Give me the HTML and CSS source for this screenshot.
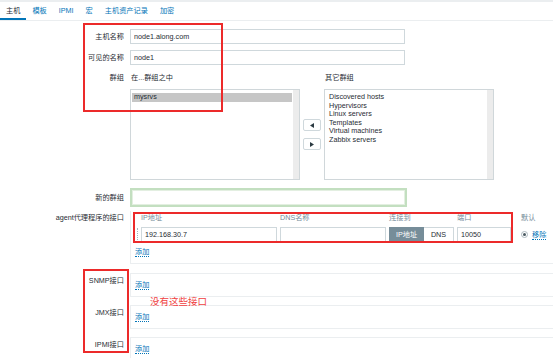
FILE: index.html
```html
<!DOCTYPE html>
<html lang="zh">
<head>
<meta charset="utf-8">
<title>主机</title>
<link rel="stylesheet" href="styles.css">
</head>
<body>
<div class="tabs">
  <span class="tab active">主机</span>
  <span class="tab">模板</span>
  <span class="tab">IPMI</span>
  <span class="tab">宏</span>
  <span class="tab">主机资产记录</span>
  <span class="tab">加密</span>
</div>
<div class="form">
  <div class="row row-name">
    <div class="lbl">主机名称</div>
    <input class="text w-long" type="text" value="node1.along.com">
  </div>
  <div class="row row-visible">
    <div class="lbl">可见的名称</div>
    <input class="text w-long" type="text" value="node1">
  </div>
  <div class="row row-groups">
    <div class="lbl">群组</div>
    <div class="groups">
      <div class="ghead">在...群组之中</div>
      <div></div>
      <div class="ghead">其它群组</div>
      <div class="listbox">
        <div class="opts"><div class="opt sel">mysrvs</div></div>
        <div class="track"></div>
      </div>
      <div class="gbtns">
        <button class="mv" type="button"><svg width="4" height="5" viewBox="0 0 4 5"><path d="M0 2.5L4 0V5Z" fill="#2b3a42"/></svg></button>
        <button class="mv" type="button"><svg width="4" height="5" viewBox="0 0 4 5"><path d="M4 2.5L0 0V5Z" fill="#2b3a42"/></svg></button>
      </div>
      <div class="listbox">
        <div class="opts">
          <div class="opt">Discovered hosts</div>
          <div class="opt">Hypervisors</div>
          <div class="opt">Linux servers</div>
          <div class="opt">Templates</div>
          <div class="opt">Virtual machines</div>
          <div class="opt">Zabbix servers</div>
        </div>
        <div class="track"></div>
      </div>
    </div>
  </div>
  <div class="row row-newgroup">
    <div class="lbl">新的群组</div>
    <div class="multiselect"></div>
  </div>
  <div class="row row-iface row-agent">
    <div class="lbl">agent代理程序的接口</div>
    <div class="ibox agent">
      <div class="igrid">
        <span></span>
        <span class="ih">IP地址</span>
        <span class="ih">DNS名称</span>
        <span class="ih">连接到</span>
        <span class="ih">端口</span>
        <span class="ih">默认</span>
        <span class="handle"></span>
        <input class="text w-ip" type="text" value="192.168.30.7">
        <input class="text w-dns" type="text" value="">
        <span class="seg"><span class="seg-on">IP地址</span><span class="seg-off">DNS</span></span>
        <input class="text w-port" type="text" value="10050">
        <span class="def"><span class="radio"></span><a class="link">移除</a></span>
      </div>
      <a class="link add">添加</a>
    </div>
  </div>
  <div class="row row-iface row-snmp">
    <div class="lbl">SNMP接口</div>
    <div class="ibox"><a class="link">添加</a></div>
  </div>
  <div class="row row-iface row-more">
    <div class="lbl">JMX接口</div>
    <div class="ibox"><a class="link">添加</a></div>
  </div>
  <div class="row row-iface row-more">
    <div class="lbl">IPMI接口</div>
    <div class="ibox"><a class="link">添加</a></div>
  </div>
</div>

<div class="mark mark-1"></div>
<div class="mark mark-2"></div>
<div class="mark mark-3"></div>
<div class="note">没有这些接口</div>
</body>
</html>
```

FILE: styles.css
```css
* {
  box-sizing: border-box;
  margin: 0;
  padding: 0;
}

html, body {
  background: #ffffff;
}

body {
  position: relative;
  width: 553px;
  height: 358px;
  overflow: hidden;
  font-family: "Liberation Sans", "Noto Sans CJK SC", sans-serif;
  font-size: 7.2px;
  line-height: 10px;
  color: #1f2c33;
}

/* ---------- tabs ---------- */
.tabs {
  display: flex;
  height: 21px;
  border-top: 2px solid #ebeef0;
  border-bottom: 1px solid #ebeef0;
}

.tab {
  height: 18px;
  padding: 2px 6px 0;
  line-height: 14px;
  color: #0275b8;
  border-bottom: 2px solid transparent;
  white-space: nowrap;
}

.tab.active {
  color: #1f2c33;
  border-bottom-color: #0275b8;
}

/* ---------- form ---------- */
.form {
  padding-top: 8px;
}

.row {
  display: grid;
  grid-template-columns: 124px 1fr;
  column-gap: 6px;
  align-items: center;
}

.lbl {
  text-align: right;
  white-space: nowrap;
  line-height: 10px;
}

.row-visible { margin-top: 6px; }
.row-groups { margin-top: 8px; align-items: start; }
.row-newgroup { margin-top: 8px; }
.row-agent { margin-top: 4px; }
.row-snmp { margin-top: 9px; }
.row-more { margin-top: 8px; }

.text {
  display: block;
  height: 15px;
  border: 1px solid #cfd8dc;
  padding: 0 3px;
  font: inherit;
  font-size: 7.2px;
  color: #1f2c33;
  background: #ffffff;
  outline: none;
}

.w-long { width: 275px; }
.w-ip { width: 136px; }
.w-dns { width: 106px; }
.w-port { width: 54px; }

/* ---------- groups ---------- */
.groups {
  display: grid;
  grid-template-columns: 170px 24px 170px;
  grid-template-rows: 10px 91px;
  row-gap: 6px;
}

.ghead {
  padding-left: 1px;
  white-space: nowrap;
}

.listbox {
  display: flex;
  border: 1px solid #d0d7da;
  background: #ffffff;
}

.opts {
  flex: 1;
  padding: 3px 1px 0;
}

.opt {
  height: 8.6px;
  line-height: 8.6px;
  padding-left: 2px;
  white-space: nowrap;
}

.opt.sel {
  background: #c6c6c6;
}

.listbox .opts .opt:not(.sel) {
  padding-left: 3px;
}

.track {
  width: 6px;
  background: #ececec;
}

.gbtns {
  display: flex;
  flex-direction: column;
  align-items: center;
  justify-content: center;
  gap: 7px;
}

.mv {
  display: flex;
  align-items: center;
  justify-content: center;
  width: 18px;
  height: 12px;
  border: 1px solid #cfd8dc;
  border-radius: 2px;
  background: #ffffff;
}

/* ---------- new group ---------- */
.multiselect {
  width: 277px;
  height: 19px;
  border: 2px solid #c3dfc0;
  box-shadow: inset 0 0 0 1px #e3efe1;
  background: #ffffff;
}

/* ---------- interfaces ---------- */
.row-iface {
  align-items: start;
}

.row-agent .lbl { padding-top: 2px; }
.row-snmp .lbl,
.row-more .lbl { padding-top: 3px; }

.ibox {
  border-left: 1px solid #ebeef0;
  border-top: 1px solid #ebeef0;
  border-bottom: 1px solid #ebeef0;
  padding: 6px 0 6px 4px;
}

.ibox.agent {
  border-top: none;
  padding: 2px 0 6px 3px;
}

.igrid {
  display: grid;
  grid-template-columns: 7px 139px 109px 68px 64px auto;
  grid-template-rows: 10px 15px;
  row-gap: 4px;
  align-items: center;
}

.ih {
  color: #768d99;
  white-space: nowrap;
}

.handle {
  width: 4px;
  height: 14px;
  border-left: 1px dotted #a9b4ba;
  border-right: 1px dotted #a9b4ba;
}

.seg {
  display: flex;
  height: 15px;
}

.seg-on,
.seg-off {
  display: flex;
  align-items: center;
  justify-content: center;
  height: 15px;
}

.seg-on {
  width: 35px;
  background: #768d99;
  border: 1px solid #768d99;
  color: #ffffff;
}

.seg-off {
  width: 30px;
  border: 1px solid #cfd8dc;
  border-left: none;
  color: #1f2c33;
}

.def {
  display: flex;
  align-items: center;
  gap: 4px;
}

.radio {
  display: flex;
  align-items: center;
  justify-content: center;
  width: 7px;
  height: 7px;
  border: 1px solid #acb8be;
  border-radius: 50%;
}

.radio::after {
  content: "";
  width: 3px;
  height: 3px;
  border-radius: 50%;
  background: #4b5a62;
}

.link {
  color: #0275b8;
  text-decoration: none;
  border-bottom: 1px dotted #0275b8;
  line-height: 9px;
  display: inline-block;
}

.add {
  margin-top: 5px;
  margin-left: 1px;
}

/* ---------- annotations (overlay) ---------- */
.mark {
  position: absolute;
  border: 2px solid #ec2a2a;
}

.mark-1 { left: 83px; top: 23px; width: 140px; height: 89px; }
.mark-2 { left: 133px; top: 212px; width: 380px; height: 31px; }
.mark-3 { left: 83px; top: 269px; width: 46px; height: 84px; }

.note {
  position: absolute;
  left: 150px;
  top: 296px;
  font-size: 9.5px;
  line-height: 12px;
  color: #f04040;
  white-space: nowrap;
}
```
